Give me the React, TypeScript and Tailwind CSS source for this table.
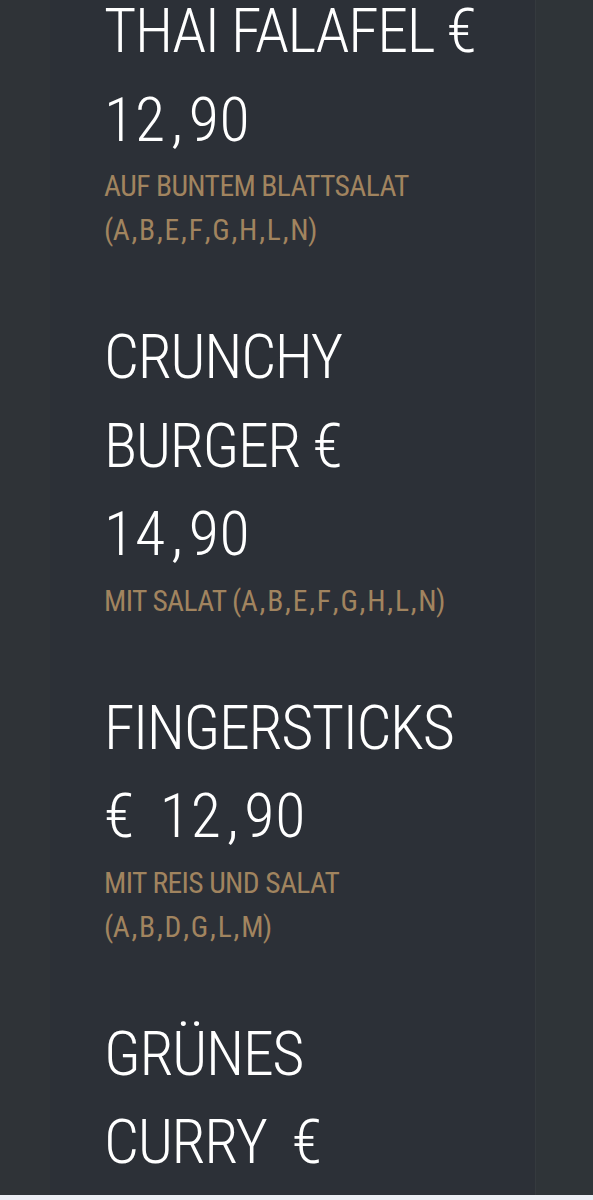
import React from "react";

const items = [
  { title: ["THAI FALAFEL €", "12,90"], desc: ["AUF BUNTEM BLATTSALAT", "(A,B,E,F,G,H,L,N)"] },
  { title: ["CRUNCHY", "BURGER €", "14,90"], desc: ["MIT SALAT (A,B,E,F,G,H,L,N)"] },
  { title: ["FINGERSTICKS", "€ 12,90"], desc: ["MIT REIS UND SALAT", "(A,B,D,G,L,M)"] },
  { title: ["GRÜNES", "CURRY\u00a0 €"], desc: [] },
];

// the commas in the menu font are much wider than in Roboto Condensed
function spaced(text: string, commaClass: string) {
  const parts = text.split(",");
  return parts.map((p, i) => (
    <React.Fragment key={i}>
      {i > 0 && <span className={commaClass}>,</span>}
      {p}
    </React.Fragment>
  ));
}

export default function App() {
  return (
    <div className="w-[593px] h-[1200px] overflow-hidden bg-[#eceef4] [font-family:'Roboto_Condensed',Roboto,sans-serif]">
      <div className="flex h-[1195px] overflow-hidden">
        <div className="w-[50px] bg-[#2f3337]" />
        <div className="w-[485px] bg-[#2c3037] pl-[54px]">
          <div className="mt-[-13px]">
            {items.map((it) => (
              <div key={it.title[0]} className="mb-[61px]">
                <h2 className="text-white text-[62px] leading-[88.5px] font-light tracking-[-1.4px]">
                  {it.title.map((t) =>
                    /\d/.test(t) ? (
                      <span key={t} className="block whitespace-pre tracking-[0.8px] [word-spacing:10px]">
                        {spaced(t, "mx-[5px]")}
                      </span>
                    ) : (
                      <span key={t} className="block whitespace-pre">
                        {t}
                      </span>
                    )
                  )}
                </h2>
                {it.desc.length > 0 && (
                  <p className="text-[#a1845f] text-[29.5px] leading-[44px] tracking-[-0.6px]">
                    {it.desc.map((d) => (
                      <span key={d} className="block whitespace-pre">
                        {spaced(d, "mx-[2.4px]")}
                      </span>
                    ))}
                  </p>
                )}
              </div>
            ))}
          </div>
        </div>
        <div className="flex-1 bg-[#2f3438] border-l border-[#353a3e]" />
      </div>
    </div>
  );
}
